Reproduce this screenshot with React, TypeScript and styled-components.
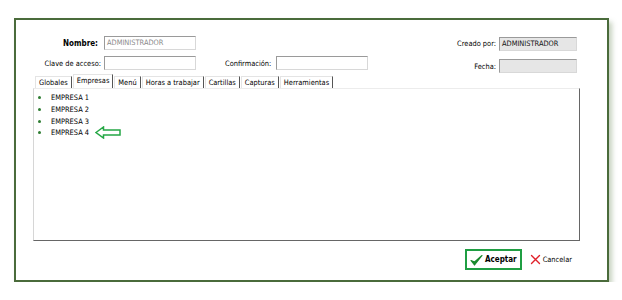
import React from "react";
import styled, { createGlobalStyle } from "styled-components";

const GlobalStyle = createGlobalStyle`
  body {
    margin: 0;
    background: #ffffff;
    font-family: "DejaVu Sans Condensed", "DejaVu Sans", sans-serif;
    font-stretch: condensed;
    font-size: 7.4px;
    color: #000;
  }
`;

const Page = styled.div`
  padding: 18px 0 0 14px;
`;

const Frame = styled.div`
  box-sizing: border-box;
  width: 595px;
  height: 264px;
  border: 2px solid #4a6b3b;
  background: #fff;
  box-shadow: 3px 4px 5px rgba(90, 120, 70, 0.35);
  padding: 16px 27px 0 17px;
  display: flex;
  flex-direction: column;
`;

const Header = styled.div`
  display: flex;
  justify-content: space-between;
  height: 38px;
`;

const FormRows = styled.div`
  display: flex;
  flex-direction: column;
  gap: 6px;
`;

const Row = styled.div`
  display: flex;
  align-items: center;
`;

const Label = styled.span<{ $width?: number; $bold?: boolean; $gap?: number }>`
  width: ${(p) => (p.$width ? `${p.$width}px` : "auto")};
  margin-left: ${(p) => p.$gap ?? 0}px;
  text-align: right;
  font-weight: ${(p) => (p.$bold ? "bold" : "normal")};
  font-size: ${(p) => (p.$bold ? "8px" : "7.4px")};
  padding-right: ${(p) => (p.$bold ? 6 : 3)}px;
  white-space: nowrap;
`;

const Field = styled.div<{ $width: number; $readonly?: boolean; $muted?: boolean; $gap?: number }>`
  box-sizing: border-box;
  width: ${(p) => p.$width}px;
  height: 14px;
  margin-left: ${(p) => p.$gap ?? 0}px;
  border: 1px solid #9a9a9a;
  border-right-color: #d8d8d8;
  border-bottom-color: #d8d8d8;
  background: ${(p) => (p.$readonly ? "#e6e6e6" : "#fff")};
  color: ${(p) => (p.$muted ? "#8a8a8a" : "#111")};
  padding: 1px 2px;
  line-height: 10px;
  white-space: nowrap;
  overflow: hidden;
`;

const SideRows = styled.div`
  display: grid;
  grid-template-columns: auto 78px;
  row-gap: 7px;
  align-items: center;
  margin-right: 3px;
`;

const Tabs = styled.div`
  display: flex;
  align-items: flex-end;
  padding-left: 2px;
  height: 14px;
`;

const Tab = styled.div<{ $active?: boolean }>`
  height: ${(p) => (p.$active ? 14 : 12)}px;
  line-height: ${(p) => (p.$active ? 12 : 11)}px;
  padding: 0 3px;
  margin-right: 1px;
  background: #fff;
  border-top: 1px solid #e4e4e4;
  border-left: 1px solid #e4e4e4;
  border-right: 1px solid #555;
  box-sizing: border-box;
  white-space: nowrap;
`;

const Panel = styled.div`
  box-sizing: border-box;
  height: 153px;
  border-top: 1px solid #ececec;
  border-left: 1px solid #d6d6d6;
  border-right: 1px solid #666;
  border-bottom: 1px solid #666;
  padding: 3px 0 0 3px;
`;

const List = styled.ul`
  list-style: none;
  margin: 0;
  padding: 0;
`;

const Item = styled.li`
  display: flex;
  align-items: center;
  height: 11.7px;
`;

const Bullet = styled.span`
  width: 3px;
  height: 3px;
  border-radius: 50%;
  background: #2e7d32;
  margin: 0 10px 0 1px;
`;

const Footer = styled.div`
  display: flex;
  justify-content: flex-end;
  align-items: center;
  padding: 8px 8px 0 0;
  gap: 8px;
`;

const Button = styled.div<{ $primary?: boolean }>`
  box-sizing: border-box;
  height: 21px;
  display: flex;
  align-items: center;
  gap: 2px;
  padding: ${(p) => (p.$primary ? "0 3px" : "0")};
  border: ${(p) => (p.$primary ? "2px solid #1f9e43" : "none")};
  font-weight: ${(p) => (p.$primary ? "bold" : "normal")};
  font-size: ${(p) => (p.$primary ? "8px" : "7.4px")};
`;

const CheckIcon = () => (
  <svg width="13" height="12" viewBox="0 0 13 12">
    <path d="M1 6.5 L4.5 11 L12 1.5 L4.6 8 Z" fill="#1a8a2e" stroke="#1a8a2e" strokeWidth="1.2" strokeLinejoin="round" />
  </svg>
);

const CrossIcon = () => (
  <svg width="11" height="11" viewBox="0 0 11 11">
    <path d="M1.5 1.5 L9.5 9.5 M9.5 1.5 L1.5 9.5" stroke="#e0202a" strokeWidth="1.4" strokeLinecap="round" />
  </svg>
);

const Arrow = () => (
  <svg width="26" height="13" viewBox="0 0 26 13" style={{ marginLeft: 6 }}>
    <polygon
      points="1,6.5 8.5,1 8.5,4 25,4 25,9 8.5,9 8.5,12"
      fill="#fff"
      stroke="#25a745"
      strokeWidth="1.5"
      strokeLinejoin="miter"
    />
  </svg>
);

const tabs = ["Globales", "Empresas", "Menú", "Horas a trabajar", "Cartillas", "Capturas", "Herramientas"];
const empresas = ["EMPRESA 1", "EMPRESA 2", "EMPRESA 3", "EMPRESA 4"];

export default function App() {
  return (
    <Page>
      <GlobalStyle />
      <Frame>
        <Header>
          <FormRows>
            <Row>
              <Label $width={65} $bold>
                Nombre:
              </Label>
              <Field $width={92} $muted>
                ADMINISTRADOR
              </Field>
            </Row>
            <Row>
              <Label $width={68}>Clave de acceso:</Label>
              <Field $width={92} />
              <Label $gap={29}>Confirmación:</Label>
              <Field $width={92} $gap={2} />
            </Row>
          </FormRows>
          <SideRows>
            <Label>Creado por:</Label>
            <Field $width={78} $readonly>
              ADMINISTRADOR
            </Field>
            <Label>Fecha:</Label>
            <Field $width={78} $readonly />
          </SideRows>
        </Header>
        <Tabs>
          {tabs.map((t) => (
            <Tab key={t} $active={t === "Empresas"}>
              {t}
            </Tab>
          ))}
        </Tabs>
        <Panel>
          <List>
            {empresas.map((e, i) => (
              <Item key={e}>
                <Bullet />
                {e}
                {i === empresas.length - 1 && <Arrow />}
              </Item>
            ))}
          </List>
        </Panel>
        <Footer>
          <Button $primary>
            <CheckIcon />
            Aceptar
          </Button>
          <Button>
            <CrossIcon />
            Cancelar
          </Button>
        </Footer>
      </Frame>
    </Page>
  );
}
